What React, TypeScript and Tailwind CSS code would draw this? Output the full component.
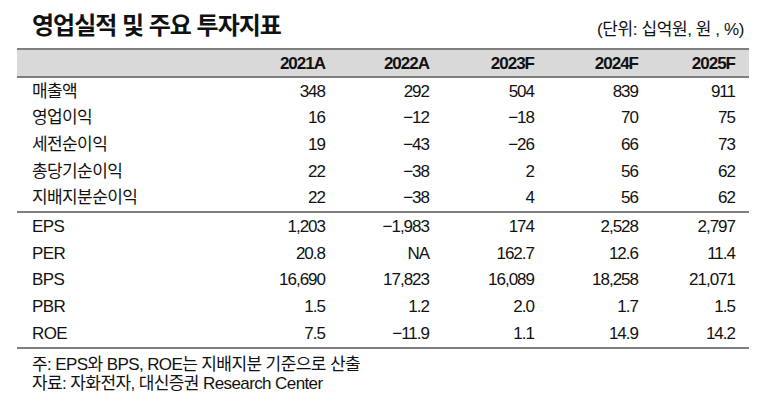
const years = ["2021A", "2022A", "2023F", "2024F", "2025F"];

const earnings = [
  { label: "매출액", values: ["348", "292", "504", "839", "911"] },
  { label: "영업이익", values: ["16", "−12", "−18", "70", "75"] },
  { label: "세전순이익", values: ["19", "−43", "−26", "66", "73"] },
  { label: "총당기순이익", values: ["22", "−38", "2", "56", "62"] },
  { label: "지배지분순이익", values: ["22", "−38", "4", "56", "62"] },
];

const valuation = [
  { label: "EPS", values: ["1,203", "−1,983", "174", "2,528", "2,797"] },
  { label: "PER", values: ["20.8", "NA", "162.7", "12.6", "11.4"] },
  { label: "BPS", values: ["16,690", "17,823", "16,089", "18,258", "21,071"] },
  { label: "PBR", values: ["1.5", "1.2", "2.0", "1.7", "1.5"] },
  { label: "ROE", values: ["7.5", "−11.9", "1.1", "14.9", "14.2"] },
];

const cols = "grid grid-cols-[204px_104px_104px_105px_104px_97px] pr-[14px]";
const font = "font-['Liberation_Sans','Noto_Sans_CJK_KR',sans-serif]";

function Row({ label, values }: { label: string; values: string[] }) {
  return (
    <div className={`${cols} items-center`}>
      <span className="pl-[15px] text-[17px] tracking-[-0.6px] leading-none">{label}</span>
      {values.map((v, i) => (
        <span key={i} className="text-right text-[17px] tracking-[-1px] leading-none">
          {v}
        </span>
      ))}
    </div>
  );
}

export default function App() {
  return (
    <div className={`w-[772px] h-[401px] bg-white text-[#111] ${font}`}>
      {/* Title + unit */}
      <div className="flex items-end justify-between h-[48px] pl-[32px] pr-[28px] pb-[10px]">
        <h1 className="text-[24px] font-bold tracking-[-1px] leading-none">영업실적 및 주요 투자지표</h1>
        <span className="text-[17px] tracking-[-0.4px] leading-none">(단위: 십억원, 원 , %)</span>
      </div>

      <div className="mx-[17px] w-[732px]">
        {/* Header */}
        <div className="border-y-2 border-[#7f7f7f] bg-[#d9d9d9] h-[30px]">
          <div className={`${cols} items-center h-full`}>
            <span />
            {years.map((y) => (
              <span key={y} className="text-right text-[17px] font-bold tracking-[-1px] leading-none">
                {y}
              </span>
            ))}
          </div>
        </div>

        <div className="grid grid-rows-5 h-[133px]">
          {earnings.map((r) => (
            <Row key={r.label} {...r} />
          ))}
        </div>
        <div className="h-[2px] bg-[#7f7f7f]" />
        <div className="grid grid-rows-5 h-[134px]">
          {valuation.map((r) => (
            <Row key={r.label} {...r} />
          ))}
        </div>
        <div className="h-[2px] bg-[#7f7f7f]" />
      </div>

      {/* Notes */}
      <div className="pl-[32px] pt-[6px] text-[17px] tracking-[-0.6px] leading-[19px]">
        <p>주: EPS와 BPS, ROE는 지배지분 기준으로 산출</p>
        <p>자료: 자화전자, 대신증권 Research Center</p>
      </div>
    </div>
  );
}
